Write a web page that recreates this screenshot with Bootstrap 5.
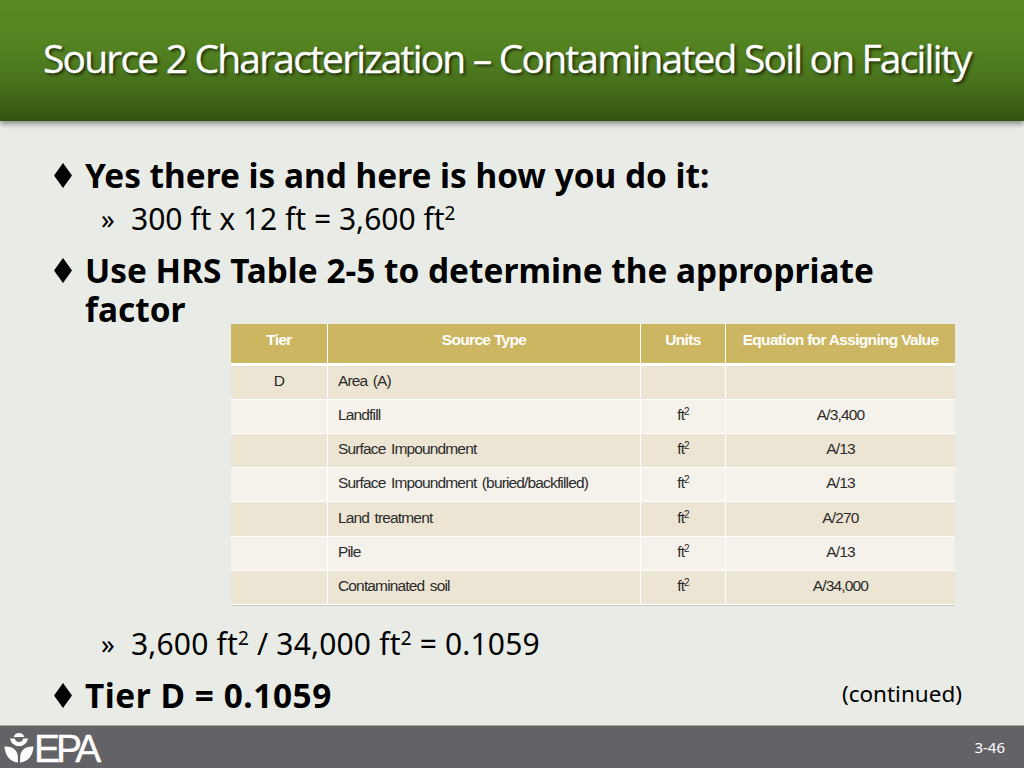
<!DOCTYPE html>
<html lang="en">
<head>
<meta charset="utf-8">
<title>Source 2 Characterization</title>
<link href="https://cdn.jsdelivr.net/npm/bootstrap@5.3.0/dist/css/bootstrap.min.css" rel="stylesheet">
<style>
html,body{height:100%;}
body{width:1024px;height:768px;overflow:hidden;background:#e9ece6;color:#000;font-family:"Noto Sans","Open Sans",sans-serif;}
.slide{height:768px;}
.slide-head{height:121px;background:linear-gradient(#5a8a23 0%,#528020 45%,#446c1a 75%,#33520f 100%);box-shadow:0 3px 5px rgba(0,0,0,.4);padding-left:43px;}
.slide-title{font-family:"Open Sans",sans-serif;font-size:39px;font-weight:400;letter-spacing:-1.82px;color:#fff;text-shadow:2px 2px 3px rgba(0,0,0,.65);-webkit-text-stroke:.3px #fff;margin:0;line-height:116px;white-space:nowrap;}
.slide-body{padding:35px 0 0 0;position:relative;}
.pt{display:flex;font-size:33.4px;font-weight:700;line-height:39px;padding-left:54px;margin:0;}
.pt-mark{width:31px;height:39px;flex:none;display:flex;align-items:center;}
.sub{display:flex;font-size:30px;line-height:36px;padding-left:101px;margin:0;}
.sub-mark{width:30px;flex:none;font-size:27px;}
.sub sup{font-size:19px;top:-.55em;line-height:0;}
.gap-a{margin-top:14px;}
.slide-body .sub-1{margin-top:6px;}
.tbl-wrap{margin:-5px 0 0 231px;width:724px;}
.src-table{width:724px;table-layout:fixed;border-collapse:separate;border-spacing:0;margin:0;font-family:"Liberation Sans",sans-serif;font-size:15.5px;letter-spacing:-.85px;color:#2b2b2b;border-bottom:1px solid #c9cbc6;word-spacing:2px;}
.src-table th,.src-table td{padding:0 0 0 10px;vertical-align:middle;border:0;box-shadow:none;}
.src-table th{background:#cdb661;color:#fff;height:42px;font-size:15.5px;font-weight:700;letter-spacing:-.68px;text-align:center;padding:0 0 7px;border-right:1px solid #fff;border-bottom:3px solid #fff;word-spacing:0;}
.src-table td{height:34px;border-right:1px solid #fff;border-bottom:1px solid #fff;padding-bottom:3px;}
.src-table tr:nth-child(odd) td{background:#ece5d3;}
.src-table tr:nth-child(even) td{background:#f5f2eb;}
.src-table tr:nth-child(5) td{height:35px;}
.src-table th:last-child,.src-table td:last-child{border-right:0;}
.src-table td.mid{text-align:center;padding-left:0;}
.src-table sup{font-size:10px;line-height:0;}
.after{margin-top:20px;letter-spacing:.17px;}
.tier-line{margin-top:14px;}
.tier-val{letter-spacing:.55px;}
.cont{font-size:22.5px;font-weight:400;line-height:39px;margin-left:auto;padding-right:62px;margin-top:-2px;}
.slide-foot{position:absolute;left:0;right:0;top:725px;height:43px;background:#636267;border-top:1px solid #a2a3a2;color:#fff;padding:0 19px 0 4px;}
.epa-word{font-family:"Liberation Sans",sans-serif;font-size:39px;letter-spacing:-4px;line-height:43px;margin-left:0;padding-top:3px;-webkit-text-stroke:.4px #fff;}
.page-no{font-family:"Noto Sans",sans-serif;font-size:15px;}
</style>
</head>
<body>
<div class="slide position-relative">
  <header class="slide-head">
    <h1 class="slide-title">Source 2 Characterization – Contaminated Soil on Facility</h1>
  </header>
  <main class="slide-body">
    <p class="pt"><span class="pt-mark"><svg width="18" height="25" viewBox="0 0 18 25" aria-hidden="true"><polygon points="9,0 18,12.500 9,25 0,12.500" fill="#000"/></svg></span><span>Yes there is and here is how you do it:</span></p>
    <p class="sub sub-1"><span class="sub-mark">»</span><span>300 ft x 12 ft = 3,600 ft<sup>2</sup></span></p>
    <p class="pt gap-a"><span class="pt-mark"><svg width="18" height="25" viewBox="0 0 18 25" aria-hidden="true"><polygon points="9,0 18,12.500 9,25 0,12.500" fill="#000"/></svg></span><span>Use HRS Table 2-5 to determine the appropriate<br>factor</span></p>
    <div class="tbl-wrap">
      <table class="table src-table">
        <colgroup><col style="width:97px"><col style="width:313px"><col style="width:85px"><col style="width:229px"></colgroup>
        <thead><tr><th>Tier</th><th>Source Type</th><th>Units</th><th>Equation for Assigning Value</th></tr></thead>
        <tbody>
          <tr><td class="mid">D</td><td>Area (A)</td><td></td><td></td></tr>
          <tr><td></td><td>Landfill</td><td class="mid">ft<sup>2</sup></td><td class="mid">A/3,400</td></tr>
          <tr><td></td><td>Surface Impoundment</td><td class="mid">ft<sup>2</sup></td><td class="mid">A/13</td></tr>
          <tr><td></td><td>Surface Impoundment (buried/backfilled)</td><td class="mid">ft<sup>2</sup></td><td class="mid">A/13</td></tr>
          <tr><td></td><td>Land treatment</td><td class="mid">ft<sup>2</sup></td><td class="mid">A/270</td></tr>
          <tr><td></td><td>Pile</td><td class="mid">ft<sup>2</sup></td><td class="mid">A/13</td></tr>
          <tr><td></td><td>Contaminated soil</td><td class="mid">ft<sup>2</sup></td><td class="mid">A/34,000</td></tr>
        </tbody>
      </table>
    </div>
    <p class="sub after"><span class="sub-mark">»</span><span>3,600 ft<sup>2</sup> / 34,000 ft<sup>2</sup> = 0.1059</span></p>
    <div class="pt tier-line"><span class="pt-mark"><svg width="18" height="25" viewBox="0 0 18 25" aria-hidden="true"><polygon points="9,0 18,12.500 9,25 0,12.500" fill="#000"/></svg></span><span class="tier-val">Tier D = 0.1059</span><span class="cont">(continued)</span></div>
  </main>
  <footer class="slide-foot d-flex align-items-center justify-content-between">
    <div class="d-flex align-items-center">
      <svg width="30" height="32" viewBox="0 0 30 32" aria-hidden="true">
        <g fill="#fff">
          <path d="M15 2a5.500 5.500 0 0 1 5.300 4H9.700A5.500 5.500 0 0 1 15 2z"/>
          <path d="M6 7.500h4.800a4.300 4.300 0 0 0 8.400 0H24a9.200 9.200 0 0 1-9 7.800 9.200 9.200 0 0 1-9-7.800z"/>
          <path d="M.5 15.500c6.500-.5 12.500 2.500 13.300 9.500l.2 6.500C6 31 .8 24 .5 15.500z"/>
          <path d="M29.500 15.500c-6.500-.5-12.500 2.500-13.300 9.500l-.2 6.500c8-.5 13.200-7.500 13.500-16z"/>
        </g>
      </svg>
      <span class="epa-word">EPA</span>
    </div>
    <span class="page-no">3-46</span>
  </footer>
</div>
<script src="https://cdn.jsdelivr.net/npm/bootstrap@5.3.0/dist/js/bootstrap.bundle.min.js"></script>
</body>
</html>
